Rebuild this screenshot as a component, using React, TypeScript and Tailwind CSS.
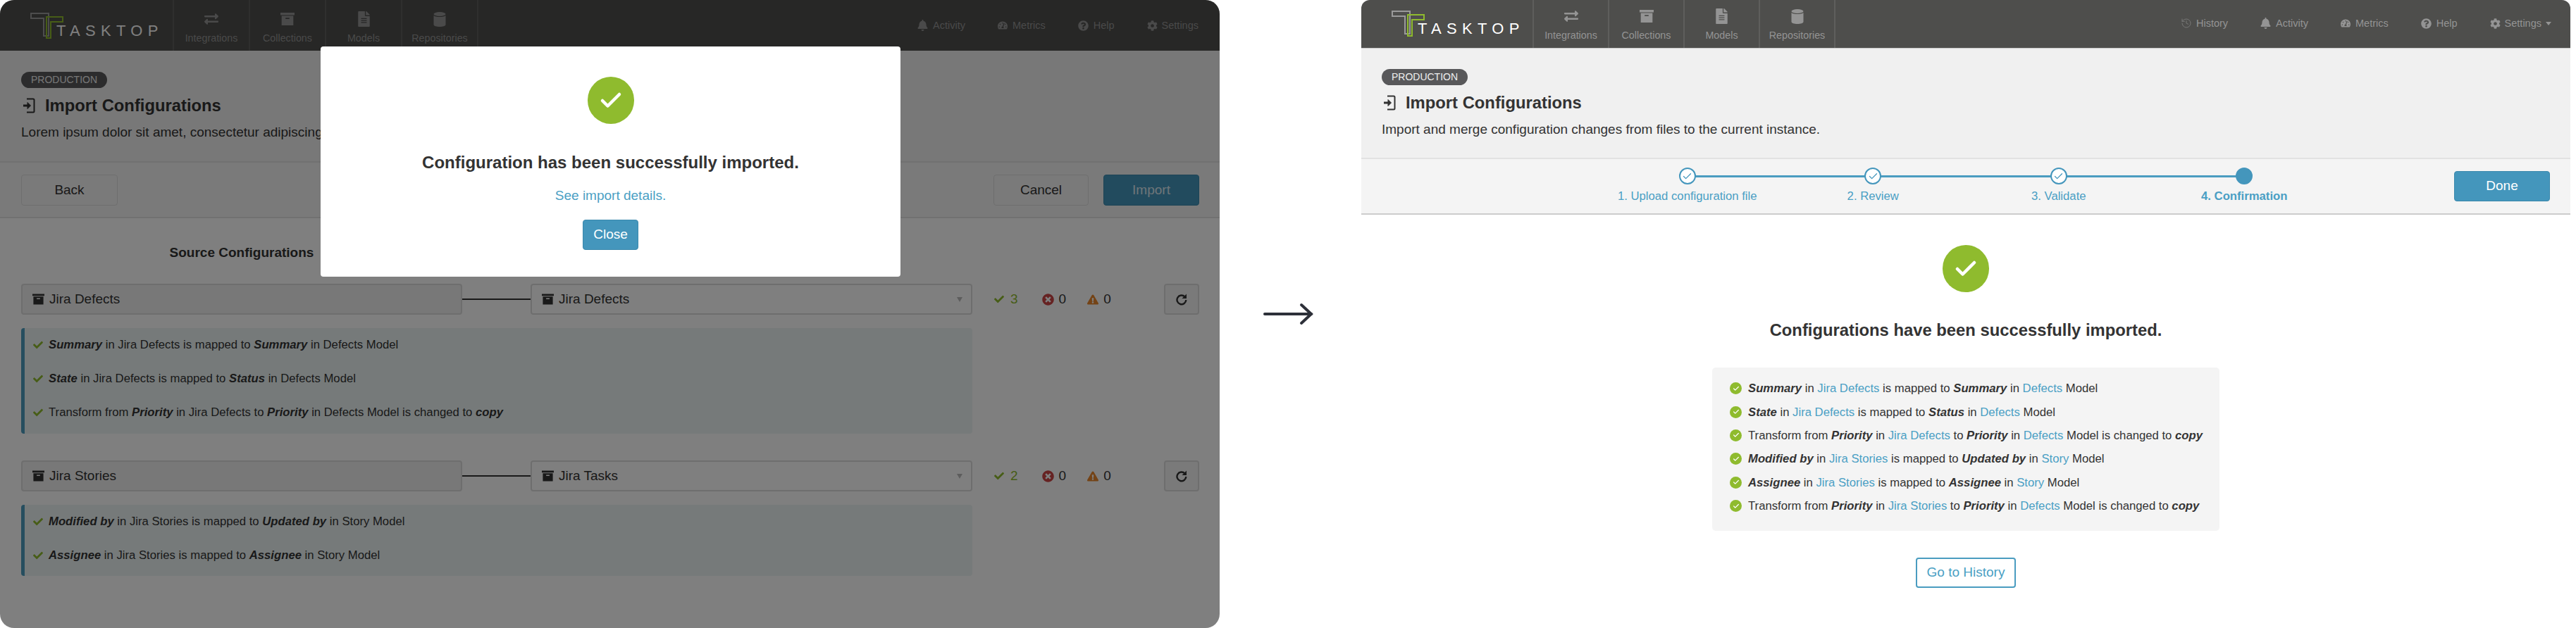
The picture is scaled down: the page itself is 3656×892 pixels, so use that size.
import type { ReactNode } from 'react';
import { Check, History } from 'lucide-react';
import {
  FaBell,
  FaCheck,
  FaCog,
  FaExchangeAlt,
  FaExclamationTriangle,
  FaFileAlt,
  FaQuestionCircle,
  FaTachometerAlt,
  FaTimesCircle,
} from 'react-icons/fa';

function ArchiveIcon({ className }: { className: string }) {
  return (
    <svg viewBox="0 0 18 16" className={className} fill="currentColor">
      <path d="M0 0h18v3H0zM1.500 4h15v12h-15zM6.500 6.500v1.500h5V6.500z" fillRule="evenodd" />
    </svg>
  );
}

function CylinderIcon({ className }: { className: string }) {
  return (
    <svg viewBox="0 0 18 21" className={className} fill="currentColor">
      <ellipse cx="9" cy="3" rx="8.500" ry="3" />
      <path d="M0.500 5c1.500 1.500 4.500 2 8.500 2s7-.5 8.500-2v13c0 1.700-3.800 3-8.500 3s-8.500-1.300-8.500-3z" />
    </svg>
  );
}

function ImportIcon() {
  return (
    <svg viewBox="0 0 18 22" className="w-[18px] h-[22px] text-[#333]" fill="none" stroke="currentColor">
      <path d="M6 1.500h9a1.500 1.500 0 0 1 1.500 1.500v16a1.500 1.500 0 0 1-1.500 1.500H6" strokeWidth="2" />
      <path d="M1 11h7" strokeWidth="3" />
      <path d="M7 6.500l4.500 4.500L7 15.500z" fill="currentColor" strokeWidth="1" />
    </svg>
  );
}

function RefreshIcon() {
  return (
    <svg viewBox="0 0 18 18" className="w-[18px] h-[18px]" fill="none" stroke="currentColor">
      <path d="M13.500 5.400A6.400 6.400 0 1 0 15.300 10" strokeWidth="2.400" />
      <path d="M16 1.500v6.500H9.500z" fill="currentColor" stroke="none" />
    </svg>
  );
}

function Logo({ tall }: { tall?: boolean }) {
  return (
    <div className={`flex items-end shrink-0 pl-[43px] ${tall ? 'w-[245px] h-[55px] pt-[16px]' : 'w-[243px] h-[52px] pt-[13px]'}`}>
      <svg viewBox="0 0 50 38" className="w-[50px] h-[38px] shrink-0" fill="none" strokeWidth="2">
        <path d="M1 2h25v32h-7V9H1z" stroke="#9a9a9a" />
        <path d="M23 7h23v7H29v23h-6z" stroke="#8fbb2e" />
      </svg>
      <span className="-ml-[13px] text-[22px] leading-[22px] tracking-[7.300px] text-white">TASKTOP</span>
    </div>
  );
}

const tabs = [
  { label: 'Integrations', icon: <FaExchangeAlt className="w-[22px] h-[20px]" /> },
  { label: 'Collections', icon: <ArchiveIcon className="w-[20px] h-[20px]" /> },
  { label: 'Models', icon: <FaFileAlt className="w-[17px] h-[22px]" /> },
  { label: 'Repositories', icon: <CylinderIcon className="w-[18px] h-[21px]" /> },
];

function TopBar({ tall }: { tall?: boolean }) {
  return (
    <header
      className={`flex shrink-0 bg-[#4e4e4c] text-[#949494] ${
        tall ? 'h-[72px]' : 'h-[69px] border-b border-[#cccccc] rounded-t-[12px]'
      }`}
    >
      <Logo tall={tall} />
      <nav className="flex border-l-2 border-[#5e5e5c]">
        {tabs.map((tab) => (
          <div
            key={tab.label}
            className={`flex flex-col items-center border-r-2 border-[#5e5e5c] ${
              tall ? 'w-[108px] pt-[15px]' : 'w-[107px] pt-[11px]'
            }`}
          >
            <div className="flex items-center h-[24px]">{tab.icon}</div>
            <span className="mt-[5px] text-[14.300px] leading-[20px]">{tab.label}</span>
          </div>
        ))}
      </nav>
      <div
        className={`ml-auto flex items-start gap-[46px] text-[14.500px] leading-[20px] ${
          tall ? 'pt-[26px] pr-[30px]' : 'pt-[23px] pr-[27px]'
        }`}
      >
        {!tall && (
          <span className="flex items-center gap-[6px]">
            <History className="w-[16px] h-[16px] opacity-60" strokeWidth={1.5} /> History
          </span>
        )}
        <span className="flex items-center gap-[7px]">
          <FaBell className="w-[15px] h-[16px]" /> Activity
        </span>
        <span className="flex items-center gap-[7px]">
          <FaTachometerAlt className="w-[14px] h-[14px]" /> Metrics
        </span>
        <span className="flex items-center gap-[7px]">
          <FaQuestionCircle className="w-[15px] h-[15px]" /> Help
        </span>
        <span className="flex items-center gap-[6px]">
          <FaCog className="w-[15px] h-[15px]" /> Settings
          {!tall && <span className="border-x-[4px] border-t-[5px] border-x-transparent border-t-[#949494]" />}
        </span>
      </div>
    </header>
  );
}

function PageHeading({ text, className }: { text: string; className: string }) {
  return (
    <section className={`bg-[#f0f0f0] border-b-2 border-[#e2e2e2] text-[#333] ${className}`}>
      <span className="inline-flex items-center justify-center h-[23px] w-[122px] rounded-full bg-[#58585a] text-[#eeeeee] text-[14px]">
        PRODUCTION
      </span>
      <h1 className="flex items-center gap-[14px] h-[32px] mt-[9px] pl-[2px] text-[23.800px] font-bold">
        <ImportIcon />
        Import Configurations
      </h1>
      <p className="mt-[9px] text-[19px] leading-[26px] whitespace-nowrap">{text}</p>
    </section>
  );
}

function Button({ children, className }: { children: ReactNode; className: string }) {
  return (
    <button className={`flex items-center justify-center rounded-[4px] border text-[19px] ${className}`}>{children}</button>
  );
}

function SelectBox({ label, className, caret }: { label: string; className: string; caret?: boolean }) {
  return (
    <div className={`flex items-center h-[44px] pl-[14px] pr-[12px] rounded-[4px] border-2 border-[#dddddd] text-[19px] text-[#333] ${className}`}>
      <ArchiveIcon className="w-[17px] h-[16px] mr-[7px]" />
      {label}
      {caret && <span className="ml-auto border-x-[4px] border-t-[7px] border-x-transparent border-t-[#bbbbbb]" />}
    </div>
  );
}

function MappingRow({ source, target, ok }: { source: string; target: string; ok: number }) {
  return (
    <div className="flex items-center">
      <SelectBox label={source} className="w-[626px] bg-[#f0f0f0]" />
      <div className="w-[97px] h-[2px] bg-[#333]" />
      <SelectBox label={target} className="w-[627px] bg-white" caret />
      <div className="flex items-center ml-[30px] text-[19px] text-[#333]">
        <FaCheck className="w-[16px] h-[14px] text-[#8fbb2e]" />
        <span className="ml-[8px] text-[#8fbb2e]">{ok}</span>
        <FaTimesCircle className="ml-[34px] w-[17px] h-[17px] text-[#cc4444]" />
        <span className="ml-[7px]">0</span>
        <FaExclamationTriangle className="ml-[30px] w-[16px] h-[15px] text-[#e8872c]" />
        <span className="ml-[7px]">0</span>
      </div>
      <button className="ml-auto flex items-center justify-center w-[50px] h-[44px] rounded-[4px] border-2 border-[#dddddd] bg-[#f4f4f4] text-[#333]">
        <RefreshIcon />
      </button>
    </div>
  );
}

function B({ children }: { children: ReactNode }) {
  return <b className="italic font-bold">{children}</b>;
}

function A({ children }: { children: ReactNode }) {
  return <span className="text-[#4a9fc4]">{children}</span>;
}

function Changes({ lines, className }: { lines: ReactNode[]; className: string }) {
  return (
    <div className={`w-[1350px] rounded-[4px] border-l-[5px] border-[#4c9dbf] bg-[#ecf5f5] text-[16.700px] text-[#333] ${className}`}>
      {lines.map((line, i) => (
        <div key={i} className="flex items-center h-[48px] pl-[11px] gap-[7px] whitespace-pre">
          <FaCheck className="w-[16px] h-[14px] text-[#8fbb2e] shrink-0" />
          <span>{line}</span>
        </div>
      ))}
    </div>
  );
}

function SuccessBadge() {
  return (
    <div className="flex items-center justify-center w-[66px] h-[67px] rounded-full bg-[#8fbb2e]">
      <Check className="w-[36px] h-[36px] text-white" strokeWidth={3} />
    </div>
  );
}

function ImportScreen() {
  return (
    <div className="relative w-[1731px] h-[892px] shrink-0 overflow-hidden rounded-[20px] bg-white">
      <TopBar tall />
      <PageHeading
        text="Lorem ipsum dolor sit amet, consectetur adipiscing elit."
        className="h-[159px] pt-[29px] pl-[30px]"
      />
      <div className="flex justify-between h-[79px] pr-[29px] pl-[30px] pt-[17px] bg-[#f4f4f4] border-b-2 border-[#e2e2e2] text-[#333]">
        <Button className="w-[137px] h-[44px] border-[#dddddd] bg-[#f4f4f4]">Back</Button>
        <div className="flex gap-[21px]">
          <Button className="w-[135px] h-[44px] border-[#dddddd] bg-[#f4f4f4]">Cancel</Button>
          <Button className="w-[136px] h-[44px] border-[#3b89ad] bg-[#4496bc] text-white/80">Import</Button>
        </div>
      </div>
      <div className="pl-[30px] pr-[29px]">
        <h2 className="w-[626px] mt-[35px] h-[28px] text-center text-[19px] leading-[28px] font-bold text-[#333]">
          Source Configurations
        </h2>
        <div className="mt-[30px]">
          <MappingRow source="Jira Defects" target="Jira Defects" ok={3} />
        </div>
        <Changes
          className="mt-[19px] h-[150px]"
          lines={[
            <><B>Summary</B> in Jira Defects is mapped to <B>Summary</B> in Defects Model</>,
            <><B>State</B> in Jira Defects is mapped to <B>Status</B> in Defects Model</>,
            <>Transform from <B>Priority</B> in Jira Defects to <B>Priority</B> in Defects Model is changed to <B>copy</B></>,
          ]}
        />
        <div className="mt-[38px]">
          <MappingRow source="Jira Stories" target="Jira Tasks" ok={2} />
        </div>
        <Changes
          className="mt-[19px] h-[101px]"
          lines={[
            <><B>Modified by</B> in Jira Stories is mapped to <B>Updated by</B> in Story Model</>,
            <><B>Assignee</B> in Jira Stories is mapped to <B>Assignee</B> in Story Model</>,
          ]}
        />
      </div>

      {/* dimmed backdrop and dialog */}
      <div className="absolute inset-0 bg-black/50" />
      <div className="absolute left-[455px] top-[66px] w-[823px] h-[327px] flex flex-col items-center pt-[43px] rounded-[4px] bg-white text-[#333]">
        <SuccessBadge />
        <h2 className="mt-[39px] h-[32px] text-[24px] leading-[32px] font-bold">Configuration has been successfully imported.</h2>
        <a className="mt-[18px] text-[19px] leading-[26px] text-[#4a9fc4]">See import details.</a>
        <Button className="mt-[21px] w-[79px] h-[43px] border-[#3b89ad] bg-[#4496bc] text-white">Close</Button>
      </div>
    </div>
  );
}

const steps = [
  { label: '1. Upload configuration file', done: true },
  { label: '2. Review', done: true },
  { label: '3. Validate', done: true },
  { label: '4. Confirmation', done: false },
];

function Stepper() {
  return (
    <div className="flex h-[79px] pt-[12px] pl-[331px] pr-[29px] bg-[#f4f4f4] border-b-2 border-[#cccccc]">
      {steps.map((step, i) => (
        <div key={step.label} className="relative flex flex-col items-center w-[263.500px] text-[#4a9fc4]">
          {i < 3 && <div className="absolute left-1/2 top-[11px] w-full h-[3px] bg-[#4a9cc0]" />}
          <div
            className={`relative flex items-center justify-center w-[24px] h-[24px] rounded-full border-2 border-[#4496bc] ${
              step.done ? 'bg-white' : 'bg-[#4496bc]'
            }`}
          >
            {step.done && <Check className="w-[15px] h-[15px] text-[#4496bc]" strokeWidth={2} />}
          </div>
          <span className={`mt-[7px] text-[16.700px] leading-[20px] ${step.done ? '' : 'font-bold'}`}>{step.label}</span>
        </div>
      ))}
      <Button className="ml-auto mt-[5px] w-[136px] h-[43px] border-[#3b89ad] bg-[#4496bc] text-white">Done</Button>
    </div>
  );
}

const results: ReactNode[] = [
  <><B>Summary</B> in <A>Jira Defects</A> is mapped to <B>Summary</B> in <A>Defects</A> Model</>,
  <><B>State</B> in <A>Jira Defects</A> is mapped to <B>Status</B> in <A>Defects</A> Model</>,
  <>Transform from <B>Priority</B> in <A>Jira Defects</A> to <B>Priority</B> in <A>Defects</A> Model is changed to <B>copy</B></>,
  <><B>Modified by</B> in <A>Jira Stories</A> is mapped to <B>Updated by</B> in <A>Story</A> Model</>,
  <><B>Assignee</B> in <A>Jira Stories</A> is mapped to <B>Assignee</B> in <A>Story</A> Model</>,
  <>Transform from <B>Priority</B> in <A>Jira Stories</A> to <B>Priority</B> in <A>Defects</A> Model is changed to <B>copy</B></>,
];

function ConfirmationScreen() {
  return (
    <div className="w-[1716px] h-[892px] shrink-0 bg-white">
      <TopBar />
      <PageHeading
        text="Import and merge configuration changes from files to the current instance."
        className="h-[157px] pt-[28px] pl-[29px]"
      />
      <Stepper />
      <div className="flex flex-col items-center pt-[43px] text-[#333]">
        <SuccessBadge />
        <h2 className="mt-[38px] h-[32px] text-[23.800px] leading-[32px] font-bold">Configurations have been successfully imported.</h2>
        <div className="mt-[37px] w-[720px] h-[232px] pt-[13px] pl-[25px] rounded-[5px] bg-[#f4f4f4] text-[16.700px]">
          {results.map((line, i) => (
            <div key={i} className="flex items-center h-[33.400px] gap-[9px] whitespace-pre">
              <div className="flex items-center justify-center w-[17px] h-[17px] shrink-0 rounded-full bg-[#8fbb2e]">
                <Check className="w-[10px] h-[10px] text-white" strokeWidth={3} />
              </div>
              <span>{line}</span>
            </div>
          ))}
        </div>
        <button className="mt-[38px] w-[142px] h-[43px] rounded-[4px] border-2 border-[#4a9cc0] bg-white text-[19px] text-[#4a9fc4]">
          Go to History
        </button>
      </div>
    </div>
  );
}

export default function App() {
  return (
    <div className="flex w-[3656px] h-[892px] bg-white font-['Liberation_Sans',Arial,sans-serif]">
      <ImportScreen />
      <div className="flex items-center justify-center w-[201px] shrink-0 pr-[6px]">
        <svg viewBox="0 0 72 32" className="w-[72px] h-[32px]" fill="none" stroke="#2d3039" strokeWidth="4" strokeLinecap="round">
          <path d="M2 16h66" />
          <path d="M54 3l14 13-14 13" />
        </svg>
      </div>
      <ConfirmationScreen />
    </div>
  );
}
